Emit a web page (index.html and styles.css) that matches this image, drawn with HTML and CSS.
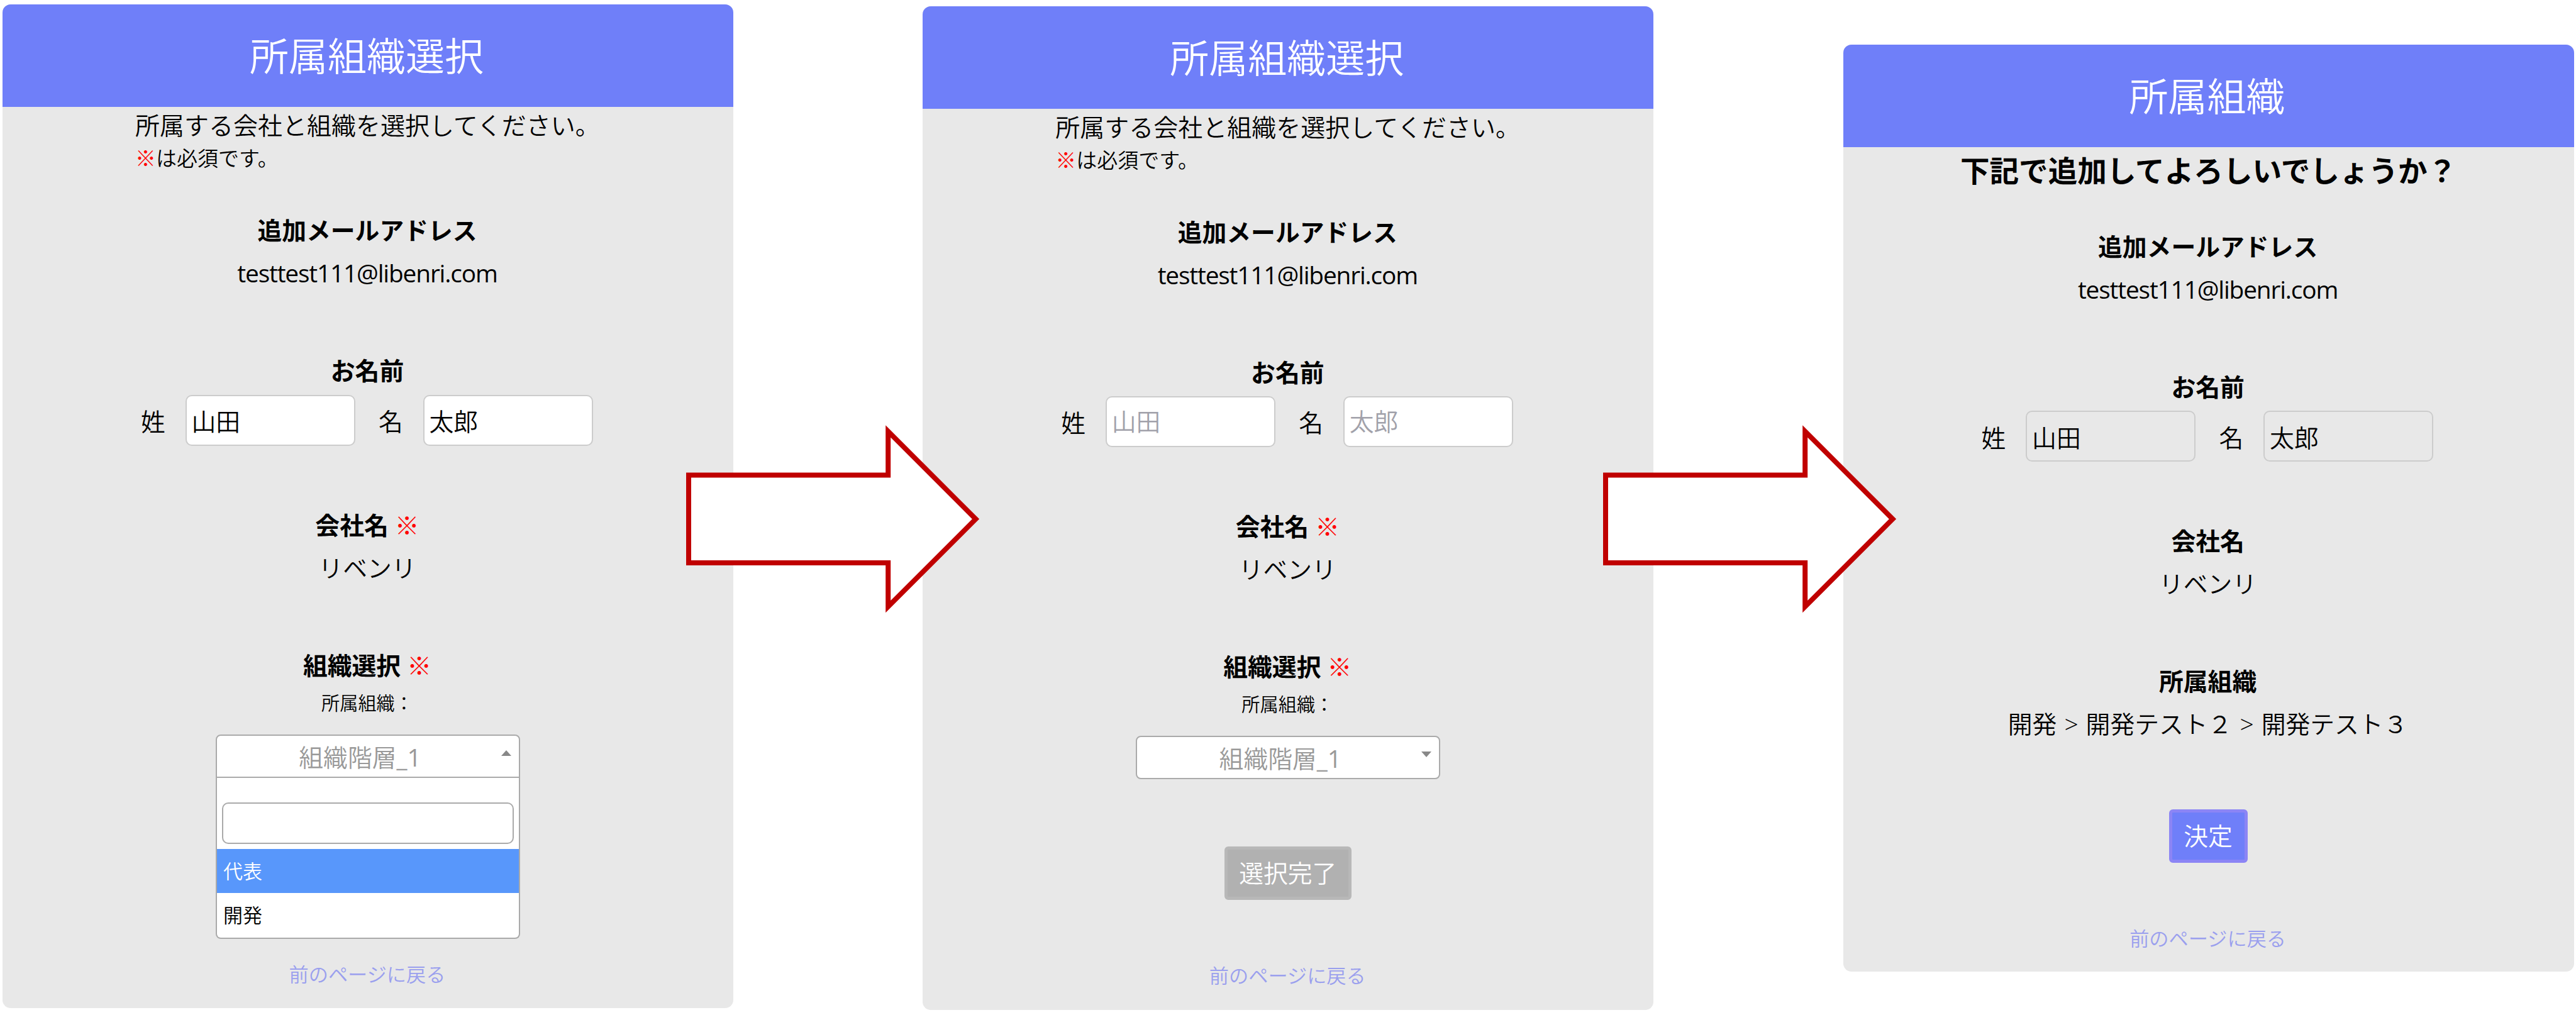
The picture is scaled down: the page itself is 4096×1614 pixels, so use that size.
FILE: index.html
```html
<!DOCTYPE html>
<html lang="ja">
<head>
    <meta charset="UTF-8">
    <meta name="viewport" content="width=device-width, initial-scale=1.0">
    <title>所属組織選択</title>
    <link rel="stylesheet" href="styles.css">
</head>
<body>
    <main class="flow">
        <!-- 組織選択（プルダウン展開） -->
        <section class="panel panel-open">
            <h1 class="panel-title">所属組織選択</h1>
            <div class="panel-body">
                <p class="intro">所属する会社と組織を選択してください。</p>
                <p class="note"><span class="required">※</span>は必須です。</p>

                <h4 class="label label-first">追加メールアドレス</h4>
                <p class="value mail">testtest111@libenri.com</p>

                <h4 class="label">お名前</h4>
                <div class="name-row">
                    <span class="name-label">姓</span>
                    <input class="name-input" type="text" value="山田">
                    <span class="name-label name-label-second">名</span>
                    <input class="name-input" type="text" value="太郎">
                </div>

                <h4 class="label">会社名 <span class="required">※</span></h4>
                <p class="value">リベンリ</p>

                <h4 class="label">組織選択 <span class="required">※</span></h4>
                <p class="sub-label">所属組織：</p>
                <div class="select open">
                    <span class="select-text">組織階層<span class="num">_1</span></span>
                    <span class="select-arrow"></span>
                    <div class="dropdown">
                        <div class="search-wrap">
                            <input class="search" type="text">
                        </div>
                        <ul class="options">
                            <li class="option active">代表</li>
                            <li class="option">開発</li>
                        </ul>
                    </div>
                </div>

                <a class="back" href="#">前のページに戻る</a>
            </div>
        </section>

        <!-- 組織選択（未選択） -->
        <section class="panel panel-closed">
            <h1 class="panel-title">所属組織選択</h1>
            <div class="panel-body">
                <p class="intro">所属する会社と組織を選択してください。</p>
                <p class="note"><span class="required">※</span>は必須です。</p>

                <h4 class="label label-first">追加メールアドレス</h4>
                <p class="value mail">testtest111@libenri.com</p>

                <h4 class="label">お名前</h4>
                <div class="name-row">
                    <span class="name-label">姓</span>
                    <input class="name-input" type="text" placeholder="山田">
                    <span class="name-label name-label-second">名</span>
                    <input class="name-input" type="text" placeholder="太郎">
                </div>

                <h4 class="label">会社名 <span class="required">※</span></h4>
                <p class="value">リベンリ</p>

                <h4 class="label">組織選択 <span class="required">※</span></h4>
                <p class="sub-label">所属組織：</p>
                <div class="select">
                    <span class="select-text">組織階層<span class="num">_1</span></span>
                    <span class="select-arrow"></span>
                </div>

                <button class="btn btn-disabled" type="button" disabled>選択完了</button>
                <a class="back" href="#">前のページに戻る</a>
            </div>
        </section>

        <!-- 確認 -->
        <section class="panel panel-confirm">
            <h1 class="panel-title">所属組織</h1>
            <div class="panel-body">
                <p class="confirm-text">下記で追加してよろしいでしょうか？</p>

                <h4 class="label label-first">追加メールアドレス</h4>
                <p class="value mail">testtest111@libenri.com</p>

                <h4 class="label">お名前</h4>
                <div class="name-row">
                    <span class="name-label">姓</span>
                    <input class="name-input" type="text" value="山田" readonly>
                    <span class="name-label name-label-second">名</span>
                    <input class="name-input" type="text" value="太郎" readonly>
                </div>

                <h4 class="label">会社名</h4>
                <p class="value">リベンリ</p>

                <h4 class="label">所属組織</h4>
                <p class="value path">開発 &gt; 開発テスト２ &gt; 開発テスト３</p>

                <button class="btn" type="button">決定</button>
                <a class="back" href="#">前のページに戻る</a>
            </div>
        </section>

        <!-- 画面遷移の矢印 -->
        <svg class="arrow arrow-1" viewBox="0 0 470 300">
            <path d="M5 80.4H322.2V11L461.5 150.3L322.2 289.7V220H5Z"/>
        </svg>
        <svg class="arrow arrow-2" viewBox="0 0 470 300">
            <path d="M5 80.4H322.2V11L461.5 150.3L322.2 289.7V220H5Z"/>
        </svg>
    </main>
</body>
</html>
```
FILE: styles.css
```css
:root {
    --main: #6f7ff9;
    --panel: #e8e8e8;
    --line: #aaa;
    --fs: 38.8px;
}

* {
    margin: 0;
    padding: 0;
    box-sizing: border-box;
}

body {
    background: #fff;
    color: #000;
    font-family: "Open Sans", "Noto Sans CJK JP", sans-serif;
    font-size: var(--fs);
    font-weight: 350;
}

.flow {
    position: relative;
    display: flex;
    align-items: flex-start;
    gap: 301.3px;
    width: 4096px;
    height: 1614px;
    padding-left: 4px;
    overflow: hidden;
}

/* パネル */
.panel {
    flex: none;
    width: 1162px;
    border-radius: 13px;
    background: var(--panel);
}

.panel-open { margin-top: 7.4px; height: 1596px; }
.panel-closed { margin-top: 9.6px; height: 1596px; }
.panel-confirm { margin-top: 71.2px; height: 1473.6px; }

.panel-title {
    height: 163px;
    padding-right: 4px;
    line-height: 165px;
    border-radius: 13px 13px 0 0;
    background: var(--main);
    color: #fff;
    font-size: 62px;
    font-weight: 350;
    text-align: center;
}

.panel-body {
    display: flex;
    flex-direction: column;
    align-items: center;
}

.intro,
.note {
    width: 100%;
    padding-left: 211px;
    line-height: 58px;
}

.intro {
    font-size: 39px;
}

.note {
    font-size: 33px;
    line-height: 48px;
}

.required {
    color: #f00;
    font-weight: 400;
}

.confirm-text {
    margin-top: 7.6px;
    font-size: 46.6px;
    font-weight: 700;
    line-height: 58px;
}

.label {
    margin-top: 97px;
    padding-right: 2px;
    font-size: var(--fs);
    font-weight: 700;
    line-height: 58px;
}

.label-first {
    margin-top: 61px;
}

.confirm-text + .label-first {
    margin-top: 63px;
}

.value {
    margin-top: 10px;
    padding-right: 2px;
    line-height: 58px;
}

.mail {
    font-weight: 400;
    letter-spacing: -1.15px;
}

.num {
    font-weight: 400;
}

.path {
    word-spacing: 2px;
}

/* お名前 */
.name-row {
    display: flex;
    align-items: center;
    width: 100%;
    height: 81px;
    margin-top: 9.3px;
    padding-left: 220px;
}

.name-label {
    width: 70.5px;
}

.name-label-second {
    margin-left: 37.5px;
}

.name-input {
    width: 270px;
    height: 81px;
    padding: 0 8px;
    border: 2.4px solid #ccc;
    border-radius: 10px;
    background: #fff;
    color: #000;
    font: inherit;
    outline: none;
}

.name-input::placeholder {
    color: #a1a1aa;
}

.name-input:read-only {
    background: transparent;
}

/* セレクト */
.sub-label {
    margin-top: 9px;
    padding-right: 2px;
    font-size: 29.2px;
    line-height: 44px;
}

.select {
    position: relative;
    display: flex;
    align-items: center;
    width: 484px;
    height: 69px;
    margin-top: 28px;
    border: 2px solid var(--line);
    border-radius: 8px;
    background: #fff;
}

.select.open {
    border-radius: 8px 8px 0 0;
}

.select-text {
    flex: 1;
    padding-right: 25px;
    color: #999;
    text-align: center;
}

.select-arrow {
    position: absolute;
    top: 23px;
    right: 12px;
    border: 8px solid transparent;
    border-top: 9.5px solid #888;
    border-bottom: 0;
}

.open .select-arrow {
    border-top: 0;
    border-bottom: 9.5px solid #888;
}

.dropdown {
    position: absolute;
    top: 67px;
    left: -2px;
    width: 484px;
    height: 256px;
    border: 2px solid var(--line);
    border-top: 0;
    border-radius: 0 0 8px 8px;
    background: #fff;
}

.search-wrap {
    padding: 39px 8px 8px;
}

.search {
    display: block;
    width: 100%;
    height: 66px;
    border: 2px solid var(--line);
    border-radius: 10px;
    background: #fff;
    outline: none;
}

.options {
    list-style: none;
}

.option {
    height: 70px;
    padding-left: 10px;
    font-size: 31px;
    line-height: 70px;
}

.option.active {
    background: #5897fb;
    color: #fff;
}

/* ボタン・リンク */
.btn {
    height: 85px;
    margin-top: 107px;
    padding: 0 19px 0 18px;
    border: 5px solid #8c85f5;
    border-radius: 6px;
    background: var(--main);
    color: #fff;
    font: inherit;
    line-height: 73px;
}

.btn-disabled {
    border-color: #b8b8b8;
    background: #b1b1b1;
}

.back {
    margin-top: 97px;
    padding-right: 2px;
    color: #9a9fee;
    font-size: 31.2px;
    line-height: 46px;
    text-decoration: none;
}

.panel-open .back {
    margin-top: 289px;
}

/* 矢印 */
.arrow {
    position: absolute;
    top: 675px;
    width: 470px;
    height: 300px;
}

.arrow path {
    fill: #fff;
    stroke: #c00000;
    stroke-width: 8px;
    stroke-miterlimit: 10;
}

.arrow-1 { left: 1090.3px; }
.arrow-2 { left: 2547.5px; }
```
